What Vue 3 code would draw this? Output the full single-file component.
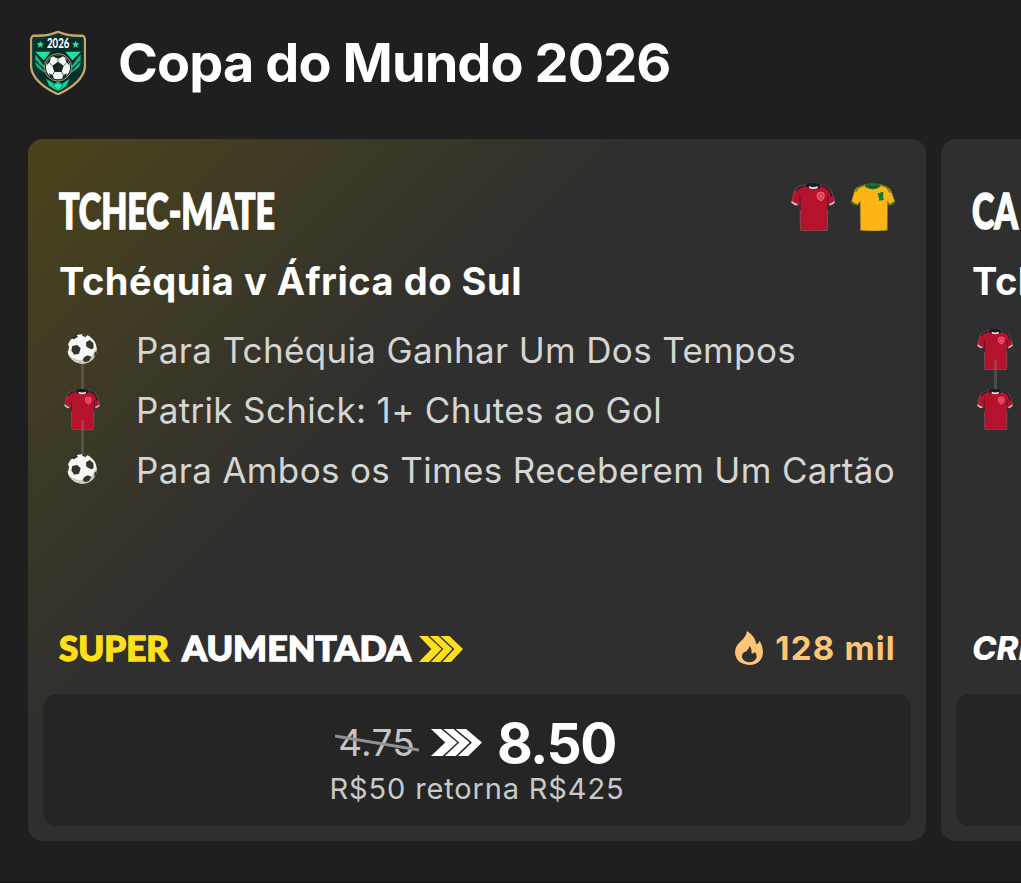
<template>
  <div class="page">
    <!-- shared icons -->
    <svg class="sprite" width="0" height="0" aria-hidden="true">
      <symbol id="shirt-red" viewBox="0 0 126 144" preserveAspectRatio="none">
        <path d="M42 4 L20 12 Q10 17 7 35 L1 57 Q8 66 19 67 L26 55 L27 142 Q65 147 104 142 L105 55 L110 67 Q120 66 126 57 L116 27 Q112 15 102 11 L83 4 Z" fill="#b5122b" stroke="#77676b" stroke-width="2" />
        <path d="M42 3 Q61 -3 83 3 L84 14 Q63 22 43 12 Z" fill="#171b29" />
        <path d="M51 10 Q64 15 77 10 L76 16 Q64 20 52 16 Z" fill="#f1e7e8" />
        <path d="M86 7 L103 14 Q112 22 117 41 M39 8 L22 15 L14 24" fill="none" stroke="#26202f" stroke-width="5" />
        <path d="M2 56 Q9 64 18 65 M110 65 Q119 63 124 56" fill="none" stroke="#d7c5ca" stroke-width="5" />
        <path d="M25 40 L27 80 M106 40 L105 80" stroke="#43152b" stroke-width="3" />
        <path d="M76 31 Q85 25 94 31 L95 41 Q93 50 85 53 Q76 48 75 40 Z" fill="#dc3047" stroke="#f0737f" stroke-width="3" />
        <path d="M81 34 L90 34 L89 43 L85 47 L81 42 Z" fill="#ee5266" />
      </symbol>
      <symbol id="shirt-yellow" viewBox="0 0 126 144" preserveAspectRatio="none">
        <path d="M42 4 L20 12 Q10 17 7 35 L1 57 Q8 66 19 67 L26 55 L27 142 Q65 147 104 142 L105 55 L110 67 Q120 66 126 57 L116 27 Q112 15 102 11 L83 4 Z" fill="#fdb515" stroke="#7b762e" stroke-width="2" />
        <path d="M39 4 Q62 -3 86 4 L84 11 Q63 26 40 11 Z" fill="#23702c" />
        <path d="M46 5 Q62 14 79 5 L75 11 Q62 17 50 11 Z" fill="#154e24" />
        <path d="M38 7 L21 14 L13 27 M88 7 L103 13 L113 29" fill="none" stroke="#57782a" stroke-width="4" />
        <path d="M2 56 Q9 64 18 65 M110 65 Q119 63 124 56" fill="none" stroke="#4c7732" stroke-width="5" />
        <path d="M77 29 L82 31 L86 27 L93 28 L92 38 L94 51 L80 53 L80 44 L77 38 Z" fill="#17763c" />
      </symbol>
      <symbol id="ball" viewBox="0 0 90 90">
        <circle cx="45" cy="45" r="44" fill="#f7f7f5" />
        <path d="M8 65 Q38 88 67 72 Q83 60 88 38 Q92 62 76 78 Q60 92 38 88 Q17 83 8 65 Z" fill="#c9c8c4" />
        <path d="M16 36 L31 33 L41 43 L36 59 L22 62 L13 50 Z M57 25 L68 18 L79 27 L80 43 L72 46 L58 38 Z M51 70 L62 64 L73 68 L67 80 L55 85 L47 79 Z M12 12 L26 0 L33 9 L20 16 Z M46 0 L62 2 L56 9 L46 6 Z M0 38 L6 32 L5 49 L1 53 Z M82 57 L89 50 L87 63 L82 68 Z" fill="#353428" />
      </symbol>
      <symbol id="chevrons" viewBox="0 0 132 76" preserveAspectRatio="none">
        <path d="M0 0 H26 L68 38 L30 76 H0 L37 38 Z" />
        <path d="M32 0 H58 L100 38 L64 76 H36 L73 38 Z" />
        <path d="M64 0 H91 L132 38 L96 76 H70 L106 38 Z" />
      </symbol>
    </svg>

    <header class="header">
      <svg class="crest" viewBox="0 0 168 192">
        <path d="M84 2 Q112 16 158 14 Q164 16 165 27 V105 Q162 153 84 190 Q6 153 3 105 V27 Q4 16 10 14 Q56 16 84 2 Z" fill="#062f2c" stroke="#c7a66a" stroke-width="7" />
        <path d="M84 11 Q115 24 152 23 Q156 25 156 32 V105 Q151 146 84 179 Q17 146 12 105 V32 Q12 25 16 23 Q53 24 84 11 Z" fill="#082d29" stroke="#0b4b3c" stroke-width="2" />
        <path d="M15 62 H62 L42 88 Z M106 62 H153 L127 88 Z" fill="#1fe0a0" />
        <path d="M16 70 L43 105 Q45 121 53 132 L27 115 Q16 105 16 94 Z M152 70 L125 105 Q123 121 115 132 L141 115 Q152 105 152 94 Z" fill="#1bb586" />
        <path d="M16 89 L46 119 M22 112 L52 133 M152 89 L122 119 M146 112 L116 133" stroke="#08372f" stroke-width="4" />
        <path d="M48 143 L73 158 L84 151 L97 158 L119 143 L109 164 Q98 174 84 180 Q70 174 58 164 Z" fill="#16d197" />
        <path d="M69 162 L84 155 L99 162 L84 179 Z" fill="#28e6ad" stroke="#0a624b" stroke-width="2" />
        <circle cx="84" cy="109" r="41" fill="#122a28" stroke="#af9770" stroke-width="3" />
        <circle cx="84" cy="109" r="36" fill="#f5f7f6" />
        <path d="M84 92 L101 104 L95 123 H73 L67 104 Z M70 77 L84 83 L98 77 L95 73 H74 Z M50 103 L59 94 L63 81 L53 90 Z M118 103 L109 94 L105 81 L115 90 Z M57 127 L68 132 L72 143 L61 138 Z M111 127 L100 132 L96 143 L107 138 Z" fill="#172624" />
        <path d="M84 83 V92 M67 104 L59 96 M101 104 L109 96 M73 123 L68 132 M95 123 L100 132" stroke="#526461" stroke-width="3" />
        <path d="M31 29 L34 37 L42 37 L36 43 L38 51 L31 46 L24 51 L26 43 L20 37 L28 37 Z M137 29 L140 37 L148 37 L142 43 L144 51 L137 46 L130 51 L132 43 L126 37 L134 37 Z" fill="#42dba7" />
        <text x="51" y="52" textLength="67" lengthAdjust="spacingAndGlyphs" class="crest-year">2026</text>
      </svg>
      <h1 class="title">Copa do Mundo 2026</h1>
    </header>

    <main class="carousel">
      <article v-for="card in cards" :key="card.name" class="card" :class="{ boosted: card.boosted }">
        <div class="card-top">
          <svg class="name" width="420" height="60">
            <text x="1" y="41" :textLength="card.nameWidth" lengthAdjust="spacingAndGlyphs">{{ card.name }}</text>
          </svg>
          <div class="kits">
            <svg v-for="kit in card.kits" :key="kit" class="kit"><use :href="'#' + kit" /></svg>
          </div>
        </div>

        <h2 class="match">{{ card.match }}</h2>

        <ul class="legs">
          <li v-for="(leg, i) in card.legs" :key="i" class="leg">
            <span class="leg-icon" :class="leg.icon">
              <svg><use :href="'#' + leg.icon" /></svg>
            </span>
            <span class="leg-text">{{ leg.text }}</span>
          </li>
        </ul>

        <div class="promo">
          <div v-if="card.boosted" class="boost">
            <svg class="boost-text" width="354" height="50">
              <text x="0" y="37" textLength="110" lengthAdjust="spacingAndGlyphs" class="super">SUPER</text>
              <text x="123" y="37" textLength="229" lengthAdjust="spacingAndGlyphs">AUMENTADA</text>
            </svg>
            <svg class="boost-arrows"><use href="#chevrons" /></svg>
          </div>
          <div v-else class="create">CRIAR APOSTA</div>
          <div v-if="card.bets" class="bets">
            <svg class="flame" viewBox="0 0 84 102">
              <path fill-rule="evenodd" d="M36 0 Q61 16 64 40 Q71 39 74 29 Q84 46 84 62 Q83 99 43 102 Q2 99 0 64 Q0 47 17 31 Q34 17 36 0 Z M44 44 Q40 60 27 64 Q18 71 22 82 Q28 94 44 94 Q61 93 65 78 Q66 69 60 63 Q56 68 50 67 Q51 53 44 44 Z" />
            </svg>
            <span>{{ card.bets }}</span>
          </div>
        </div>

        <div class="odds">
          <template v-if="card.price">
            <div class="prices">
              <span class="old">
                {{ card.oldPrice }}
                <svg class="strike" viewBox="0 0 84 18"><path d="M0 2 L84 16" /></svg>
              </span>
              <svg class="arrows"><use href="#chevrons" /></svg>
              <span class="new">{{ card.price }}</span>
            </div>
            <div class="returns">{{ card.returns }}</div>
          </template>
        </div>
      </article>
    </main>
  </div>
</template>

<script setup>
const cards = [
  {
    name: "TCHEC-MATE",
    nameWidth: 216,
    match: "Tchéquia v África do Sul",
    kits: ["shirt-red", "shirt-yellow"],
    boosted: true,
    bets: "128 mil",
    oldPrice: "4.75",
    price: "8.50",
    returns: "R$50 retorna R$425",
    legs: [
      { icon: "ball", text: "Para Tchéquia Ganhar Um Dos Tempos" },
      { icon: "shirt-red", text: "Patrik Schick: 1+ Chutes ao Gol" },
      { icon: "ball", text: "Para Ambos os Times Receberem Um Cartão" },
    ],
  },
  {
    name: "CA",
    nameWidth: 46,
    match: "Tchéquia v África do Sul",
    kits: [],
    boosted: false,
    legs: [
      { icon: "shirt-red", text: "" },
      { icon: "shirt-red", text: "" },
    ],
  },
];
</script>

<style>
body {
  background: #1f1f1f;
  overflow: hidden;
}
</style>

<style scoped>
.page {
  box-sizing: border-box;
  width: 1021px;
  height: 883px;
  overflow: hidden;
  background: #1f1f1f;
  border-bottom: 1px solid #131313;
  color: #fff;
  font-family: Inter, "Liberation Sans", sans-serif;
}

.sprite {
  display: block;
}

.header {
  display: flex;
  align-items: center;
  height: 125px;
  padding: 0 0 0 30px;
  gap: 32px;
}

.crest {
  width: 56px;
  height: 64px;
}

.crest-year {
  fill: #fff;
  font: 900 37px Lato, sans-serif;
}

.title {
  margin: 0;
  font-size: 54px;
  line-height: 66px;
  font-weight: 700;
  letter-spacing: -0.9px;
  white-space: nowrap;
}

.carousel {
  display: flex;
  gap: 15px;
  margin-top: 14px;
  padding-left: 28px;
}

.card {
  box-sizing: border-box;
  display: flex;
  flex-direction: column;
  flex: 0 0 898px;
  height: 702px;
  padding: 44px 15px 15px;
  border-radius: 15px;
  background: #2f2f2f;
}

.card.boosted {
  background: linear-gradient(135deg, #4b441b 0%, #2f2f2f 39%);
}

.card-top {
  display: flex;
  justify-content: space-between;
  height: 50px;
  padding: 0 16px 0 15px;
}

.name {
  margin-top: 5px;
  overflow: visible;
  fill: #fff;
  stroke: #fff;
  stroke-width: 1.6px;
  font: 900 49px Lato, sans-serif;
}

.kits {
  display: flex;
  gap: 16px;
}

.kit {
  width: 44px;
  height: 48px;
}

.match {
  margin: 24px 0 0 16px;
  font-size: 38px;
  line-height: 48px;
  font-weight: 700;
  letter-spacing: 0.55px;
  white-space: nowrap;
}

.legs {
  margin: 15px 0 0;
  padding: 0 0 0 20px;
  list-style: none;
}

.leg {
  display: flex;
  align-items: center;
  height: 60px;
  gap: 35px;
}

.leg-icon {
  position: relative;
  display: flex;
  align-items: center;
  justify-content: center;
  width: 38px;
  height: 41px;
  margin-bottom: 2px;
}

.leg-icon svg {
  position: relative;
  width: 36px;
  height: 41px;
}

.leg-icon.ball svg {
  width: 30px;
  height: 30px;
  z-index: 1;
}

.leg:not(:last-child) .leg-icon::after {
  content: "";
  position: absolute;
  left: 18px;
  top: 31px;
  width: 3px;
  height: 35px;
  background: rgba(150, 150, 150, 0.28);
}

.leg-text {
  color: #d5d5d3;
  font-size: 35px;
  letter-spacing: 0.34px;
  white-space: nowrap;
}

.promo {
  display: flex;
  align-items: center;
  justify-content: space-between;
  height: 60px;
  margin-top: auto;
  margin-bottom: 15px;
  padding: 0 16px;
}

.boost {
  display: flex;
  align-items: center;
  gap: 6px;
}

.boost-text {
  overflow: visible;
  fill: #fff;
  stroke: #fff;
  stroke-width: 1.3px;
  font: 900 34px Lato, sans-serif;
}

.super {
  fill: #ffdf1b;
  stroke: #ffdf1b;
}

.boost-arrows {
  width: 44px;
  height: 26px;
  fill: #ffdf1b;
}

.create {
  font-size: 33px;
  line-height: 40px;
  font-weight: 800;
  font-style: italic;
  margin-bottom: 2px;
  white-space: nowrap;
}

.bets {
  display: flex;
  align-items: center;
  gap: 12px;
  margin-bottom: 2px;
  color: #ffc577;
  font-size: 33px;
  font-weight: 700;
  letter-spacing: 1.2px;
}

.bets span {
  margin-right: -1px;
}

.flame {
  width: 28px;
  height: 34px;
  fill: #ffc577;
}

.odds {
  box-sizing: border-box;
  height: 132px;
  padding-top: 17px;
  border-radius: 14px;
  background: #252525;
}

.prices {
  display: flex;
  align-items: center;
  justify-content: center;
  height: 63px;
}

.old {
  position: relative;
  color: #c4c4c4;
  font-size: 37px;
  letter-spacing: 0.2px;
}

.strike {
  position: absolute;
  left: -3px;
  top: 14px;
  width: 84px;
  height: 18px;
  fill: none;
  stroke: #929292;
  stroke-width: 3px;
}

.arrows {
  width: 51px;
  height: 27px;
  margin: 0 15px 0 16px;
  fill: #fff;
}

.new {
  font-size: 55px;
  font-weight: 700;
  letter-spacing: -1.5px;
}

.returns {
  color: #c9c9c9;
  font-size: 29px;
  line-height: 30px;
  letter-spacing: 0.85px;
  text-align: center;
}
</style>
